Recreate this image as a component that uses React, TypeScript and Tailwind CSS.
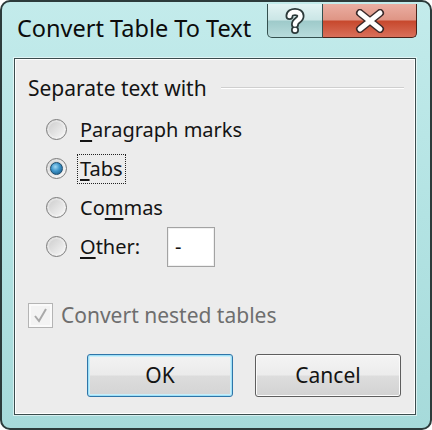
import React from "react";

function Radio({ checked }: { checked?: boolean }) {
  return (
    <div className="w-[21px] h-[21px] rounded-full border border-[#7b7b7b] bg-gradient-to-br from-[#dcdcdc] to-[#f8f8f8] flex items-center justify-center shrink-0">
      <div className="w-[15px] h-[15px] rounded-full bg-gradient-to-br from-[#cfcfcf] to-[#f4f4f4] flex items-center justify-center">
        {checked ? (
          <div className="w-[13px] h-[13px] rounded-full border border-[#1d4d6e] bg-[radial-gradient(circle_at_40%_35%,#9fd8f4_0%,#3c93c8_45%,#16517c_100%)]" />
        ) : null}
      </div>
    </div>
  );
}

export default function App() {
  return (
    <div className="w-[432px] h-[430px] bg-white font-['Noto_Sans',sans-serif] text-[#141414]">
      <div className="w-[432px] h-[430px] rounded-[10px] border-2 border-[#2c3b3b] bg-gradient-to-b from-[#c3ebeb] via-[#b3e3e3] to-[#a6dada] flex flex-col pl-[12px] pr-[14px] pb-[13px]">
        <div className="h-[56px] flex items-start justify-between">
          <div className="pl-[3px] pt-[11px] text-[23.5px] leading-[30px] text-[#0c0c0c]">
            Convert Table To Text
          </div>
          <div className="flex mt-[2px] mr-[-1px]">
            <div className="w-[56px] h-[34px] border border-[#34504f] border-t-0 rounded-bl-[5px] bg-[linear-gradient(to_bottom,#e2f3f3_0%,#cbe6e6_48%,#9ecaca_52%,#b8dcdc_100%)] flex items-center justify-center">
              <svg width="24" height="28" viewBox="0 0 24 28">
                <path
                  d="M6.5 9 C6.5 3.5, 17.5 3.5, 17.5 9 C17.5 13.5, 12 13, 12 17.5"
                  fill="none"
                  stroke="#2c3a3a"
                  strokeWidth="8"
                  strokeLinecap="round"
                />
                <circle cx="12" cy="23" r="4" fill="#2c3a3a" />
                <path
                  d="M6.5 9 C6.5 3.5, 17.5 3.5, 17.5 9 C17.5 13.5, 12 13, 12 17.5"
                  fill="none"
                  stroke="#ffffff"
                  strokeWidth="4.5"
                  strokeLinecap="round"
                />
                <circle cx="12" cy="23" r="2.3" fill="#ffffff" />
              </svg>
            </div>
            <div className="w-[94px] h-[34px] border border-[#4a2219] border-t-0 border-l-0 rounded-br-[5px] bg-[linear-gradient(to_bottom,#eaaea2_0%,#df9585_48%,#c7482d_52%,#d9705a_100%)] flex items-center justify-center">
              <svg width="32" height="24" viewBox="0 0 32 24">
                <path d="M6 4 L26 20 M26 4 L6 20" stroke="#3a2a2a" strokeWidth="8" strokeLinecap="round" />
                <path d="M6 4 L26 20 M26 4 L6 20" stroke="#ffffff" strokeWidth="5" strokeLinecap="round" />
              </svg>
            </div>
          </div>
        </div>
        <div className="flex-1 border border-[#3b4d4e] bg-[#ececec] shadow-[inset_0_0_0_1px_#ffffff,0_0_0_1px_rgba(255,255,255,0.55)] flex flex-col pt-[15px]">
          <div className="h-[28px] flex items-center pl-[13px] pr-[11px]">
            <span className="text-[21px] leading-[28px]">Separate text with</span>
            <div className="flex-1 ml-[14px] h-[2px] border-t border-[#cfcfcf] border-b-white border-b" />
          </div>
          <div className="mt-[8px] flex flex-col pl-[31px]">
            <div className="h-[39px] flex items-center">
              <Radio />
              <span className="ml-[13px] text-[20px] leading-[28px]">
                <span className="underline underline-offset-[3px]">P</span>aragraph marks
              </span>
            </div>
            <div className="h-[39px] flex items-center">
              <Radio checked />
              <span className="ml-[10px] text-[20px] leading-[28px] border border-dotted border-[#222] px-[2px]">
                <span className="underline underline-offset-[3px]">T</span>abs
              </span>
            </div>
            <div className="h-[39px] flex items-center">
              <Radio />
              <span className="ml-[13px] text-[20px] leading-[28px]">
                Co<span className="underline underline-offset-[3px]">m</span>mas
              </span>
            </div>
            <div className="h-[39px] flex items-center">
              <Radio />
              <span className="ml-[13px] w-[87px] text-[20px] leading-[28px]">
                <span className="underline underline-offset-[3px]">O</span>ther:
              </span>
              <div className="w-[48px] h-[40px] border border-[#a3a3a3] bg-white shadow-[inset_0_0_0_1px_#f0f0f0] flex items-center pl-[7px] text-[20px]">
                -
              </div>
            </div>
          </div>
          <div className="mt-[34px] h-[30px] flex items-center pl-[13px]">
            <div className="w-[25px] h-[25px] border border-[#b4b4b4] bg-[#f3f3f3] shadow-[inset_0_0_0_2px_#fafafa] flex items-center justify-center">
              <svg width="17" height="17" viewBox="0 0 17 17">
                <path d="M3 9 L7 14 L14 2" fill="none" stroke="#a9a9a9" strokeWidth="2" />
              </svg>
            </div>
            <span className="ml-[8px] text-[21px] leading-[28px] text-[#6e6e6e]">Convert nested tables</span>
          </div>
          <div className="mt-[24px] flex justify-end gap-[22px] pr-[14px]">
            <div className="w-[146px] h-[43px] rounded-[3px] border border-[#2f75a8] shadow-[inset_0_0_0_1px_#9fe0f7,inset_0_0_0_2px_#c9eefa] bg-[linear-gradient(to_bottom,#f3f3f3_0%,#ebebeb_48%,#dcdcdc_52%,#d4d4d4_100%)] flex items-center justify-center text-[21px]">
              OK
            </div>
            <div className="w-[146px] h-[43px] rounded-[3px] border border-[#5e5e5e] shadow-[inset_0_0_0_1px_#fbfbfb] bg-[linear-gradient(to_bottom,#f4f4f4_0%,#ececec_48%,#dddddd_52%,#d2d2d2_100%)] flex items-center justify-center text-[21px]">
              Cancel
            </div>
          </div>
        </div>
      </div>
    </div>
  );
}
